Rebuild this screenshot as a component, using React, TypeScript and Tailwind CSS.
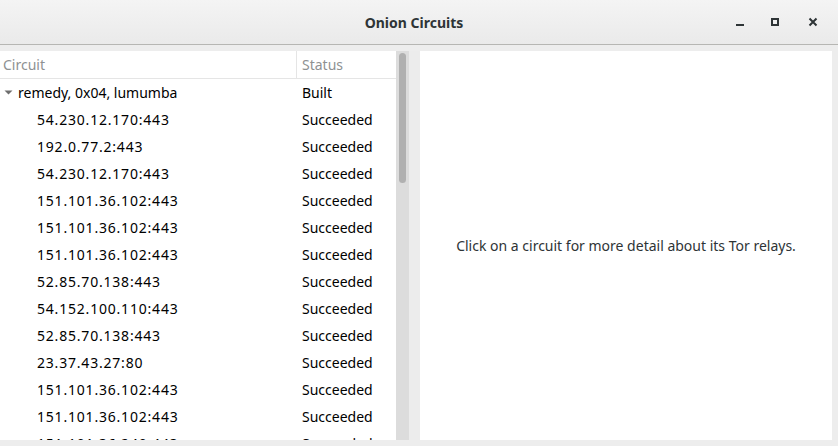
import React from 'react';

const rows: { circuit: string; status: string; parent?: boolean }[] = [
  { circuit: 'remedy, 0x04, lumumba', status: 'Built', parent: true },
  { circuit: '54.230.12.170:443', status: 'Succeeded' },
  { circuit: '192.0.77.2:443', status: 'Succeeded' },
  { circuit: '54.230.12.170:443', status: 'Succeeded' },
  { circuit: '151.101.36.102:443', status: 'Succeeded' },
  { circuit: '151.101.36.102:443', status: 'Succeeded' },
  { circuit: '151.101.36.102:443', status: 'Succeeded' },
  { circuit: '52.85.70.138:443', status: 'Succeeded' },
  { circuit: '54.152.100.110:443', status: 'Succeeded' },
  { circuit: '52.85.70.138:443', status: 'Succeeded' },
  { circuit: '23.37.43.27:80', status: 'Succeeded' },
  { circuit: '151.101.36.102:443', status: 'Succeeded' },
  { circuit: '151.101.36.102:443', status: 'Succeeded' },
  { circuit: '151.101.36.240:443', status: 'Succeeded' },
];

export default function App() {
  return (
    <div className="w-[838px] h-[446px] overflow-hidden flex flex-col bg-[#ededed] text-[#2e3436] font-['Noto_Sans',sans-serif]">
      {/* Title bar */}
      <div className="h-[45px] shrink-0 flex items-center relative bg-gradient-to-b from-[#f4f4f4] to-[#eaeaea] border-b border-[#b6b6b3]">
        <div className="flex-1 text-center pr-[10px] text-[14px] font-bold text-[#2e3436]">Onion Circuits</div>
        <div className="absolute right-[4px] top-0 h-full flex items-center">
          <div className="w-[35px] flex justify-center">
            <div className="w-[8px] h-[2px] bg-[#2e3436] mt-[6px]" />
          </div>
          <div className="w-[35px] flex justify-center">
            <div className="w-[8px] h-[8px] border-2 border-[#2e3436]" />
          </div>
          <div className="w-[42px] flex justify-center">
            <svg width="10" height="10" viewBox="0 0 10 10">
              <path d="M1.5 1.5 L8.5 8.5 M8.5 1.5 L1.5 8.5" stroke="#2e3436" strokeWidth="2" />
            </svg>
          </div>
        </div>
      </div>

      {/* Body */}
      <div className="flex-1 flex pt-[6px] pb-[6px] pr-[6px] min-h-0">
        {/* Left: tree view */}
        <div className="w-[396px] bg-white overflow-hidden">
          <div className="flex h-[28px] border-b border-[#e5e5e5] text-[14px] text-[#8e9192]">
            <div className="w-[297px] pl-[3px] flex items-center border-r border-[#e5e5e5]">Circuit</div>
            <div className="flex-1 pl-[5px] flex items-center">Status</div>
          </div>
          {rows.map((r, i) => (
            <div key={i} className="flex h-[27px] items-center text-[14px] text-black">
              <div
                className={`w-[297px] flex items-center ${
                  r.parent ? 'pl-[4px]' : 'pl-[37px] tracking-[0.8px]'
                }`}
              >
                {r.parent && (
                  <svg width="9" height="9" viewBox="0 0 9 9" className="mr-[5px]">
                    <path d="M0.5 2.5 L8.5 2.5 L4.5 6.5 Z" fill="#6e6e6e" />
                  </svg>
                )}
                {r.circuit}
              </div>
              <div className="flex-1 pl-[5px]">{r.status}</div>
            </div>
          ))}
        </div>
        {/* Scrollbar */}
        <div className="w-[13px] bg-[#dcdcdc] pt-[2px] flex justify-center">
          <div className="w-[7px] h-[130px] rounded-full bg-[#b0b0b0]" />
        </div>
        {/* Pane separator */}
        <div className="w-[11px] bg-[#ececec]" />
        {/* Right: detail */}
        <div className="flex-1 bg-white flex items-center justify-center text-[14px] text-[#2e3436]">
          Click on a circuit for more detail about its Tor relays.
        </div>
      </div>
    </div>
  );
}
